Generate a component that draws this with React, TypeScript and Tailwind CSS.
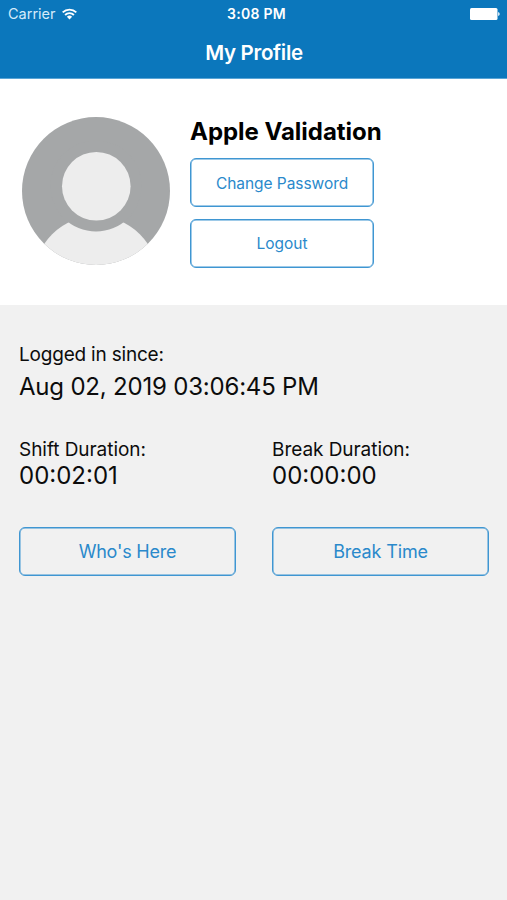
import type { ReactNode } from "react";

const profile = {
  name: "Apple Validation",
  loggedInSince: "Aug 02, 2019 03:06:45 PM",
  shiftDuration: "00:02:01",
  breakDuration: "00:00:00",
};

export default function App() {
  return (
    <main className="min-h-screen bg-[#f1f1f1] font-['Inter',sans-serif] text-[#0c0c0c]">
      <header className="h-[79px] border-b border-[#5aa5d6] bg-[#0b77bc] text-white">
        <StatusBar />
        <h1 className="pt-[11px] pl-px text-center text-[20.5px] leading-[30px] font-semibold tracking-[-0.3px]">
          My Profile
        </h1>
      </header>

      <section className="flex h-[226px] bg-white pt-[38px] pl-[22px]">
        <Avatar />
        <div className="ml-5 w-[184px]">
          <h2 className="h-[41px] pt-px text-[24px] leading-[28px] font-bold tracking-[-0.03px] whitespace-nowrap text-black">
            {profile.name}
          </h2>
          <div className="flex flex-col gap-3">
            <OutlineButton className="pt-[2px] text-[15.5px] tracking-[-0.05px]">Change Password</OutlineButton>
            <OutlineButton className="text-[15.5px]">Logout</OutlineButton>
          </div>
        </div>
      </section>

      <section className="px-[19px] pt-[37px]">
        <p className="text-[19px] leading-[26px] tracking-[-0.2px]">Logged in since:</p>
        <p className="mt-[3px] text-[24px] leading-[32px] tracking-[-0.2px]">{profile.loggedInSince}</p>

        <div className="mt-[35px] grid grid-cols-[217px_217px] gap-x-9">
          <Duration label="Shift Duration:" value={profile.shiftDuration} />
          <Duration label="Break Duration:" value={profile.breakDuration} />
          <OutlineButton className="mt-[37px] text-[18px] tracking-[-0.2px]">Who's Here</OutlineButton>
          <OutlineButton className="mt-[37px] text-[18px] tracking-[-0.15px]">Break Time</OutlineButton>
        </div>
      </section>
    </main>
  );
}

function StatusBar() {
  return (
    <div className="grid h-[27px] grid-cols-3 items-center pr-[7px] pl-[8px]">
      <div className="flex items-center gap-[6px]">
        <span className="text-[14.5px] text-[#d5ebfa]">Carrier</span>
        <svg width="15" height="12" viewBox="0 0 15 12" fill="none" stroke="white" strokeWidth="1.9">
          <path d="M0.7 4.4a9.7 9.7 0 0 1 13.6 0" />
          <path d="M3.1 7a6.2 6.2 0 0 1 8.8 0" />
          <path d="M7.5 11.4L4.9 8.8a3.7 3.7 0 0 1 5.2 0z" fill="white" stroke="none" />
        </svg>
      </div>
      <span className="pl-[5px] text-center text-[14px] font-semibold tracking-[0.3px]">3:08 PM</span>
      <svg className="justify-self-end" width="30" height="12" viewBox="0 0 30 12" fill="white">
        <rect x="0" y="0" width="27.5" height="12" rx="1.5" />
        <path d="M28.2 4a2.1 2.1 0 0 1 0 4z" />
      </svg>
    </div>
  );
}

function Avatar() {
  return (
    <svg className="shrink-0" width="148" height="148" viewBox="0 0 148 148">
      <clipPath id="avatar">
        <circle cx="74" cy="74" r="74" />
      </clipPath>
      <g clipPath="url(#avatar)">
        <rect width="148" height="148" fill="#a5a7a8" />
        <circle cx="74" cy="161" r="62" fill="#ededed" />
        <circle cx="74" cy="69" r="45.5" fill="#a5a7a8" />
        <circle cx="74.3" cy="69.2" r="34.3" fill="#ededed" />
      </g>
    </svg>
  );
}

function Duration({ label, value }: { label: string; value: string }) {
  return (
    <div>
      <p className="text-[19px] leading-[24px] tracking-[-0.05px]">{label}</p>
      <p className="text-[24px] leading-[28px]">{value}</p>
    </div>
  );
}

function OutlineButton({ className, children }: { className: string; children: ReactNode }) {
  return (
    <button
      className={`h-[49px] w-full rounded-[6px] border border-[#3f96d2] text-[#2a89cb] shadow-[inset_0_0_0_0.5px_#3f96d2] ${className}`}
    >
      {children}
    </button>
  );
}
